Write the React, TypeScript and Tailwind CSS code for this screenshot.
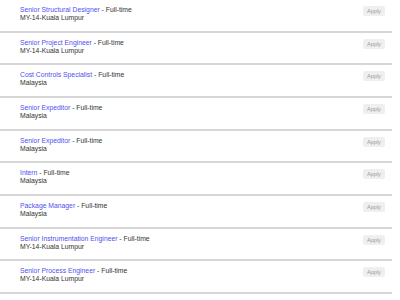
const jobs = [
  { title: "Senior Structural Designer", place: "MY-14-Kuala Lumpur" },
  { title: "Senior Project Engineer", place: "MY-14-Kuala Lumpur" },
  { title: "Cost Controls Specialist", place: "Malaysia" },
  { title: "Senior Expeditor", place: "Malaysia" },
  { title: "Senior Expeditor", place: "Malaysia" },
  { title: "Intern", place: "Malaysia" },
  { title: "Package Manager", place: "Malaysia" },
  { title: "Senior Instrumentation Engineer", place: "MY-14-Kuala Lumpur" },
  { title: "Senior Process Engineer", place: "MY-14-Kuala Lumpur" },
];

export default function App() {
  return (
    <div className="w-[400px] h-[300px] bg-white overflow-hidden font-['Liberation_Sans',Arial,sans-serif]">
      <ul className="w-[392px]">
        {jobs.map((job, i) => (
          <li
            key={i}
            className="h-[32.67px] border-b-2 border-[#d6d6d6] flex justify-between pl-5 pr-[7px] pt-[6px]"
          >
            <div className="text-[6.8px] leading-[8px] text-[#333]">
              <div>
                <a href="#" className="text-[#5050f0]">{job.title}</a> - Full-time
              </div>
              <div>{job.place}</div>
            </div>
            <button className="h-[10px] w-[22px] bg-[#efefef] rounded-[2px] text-[5.5px] leading-[10px] text-[#999]">
              Apply
            </button>
          </li>
        ))}
      </ul>
    </div>
  );
}
